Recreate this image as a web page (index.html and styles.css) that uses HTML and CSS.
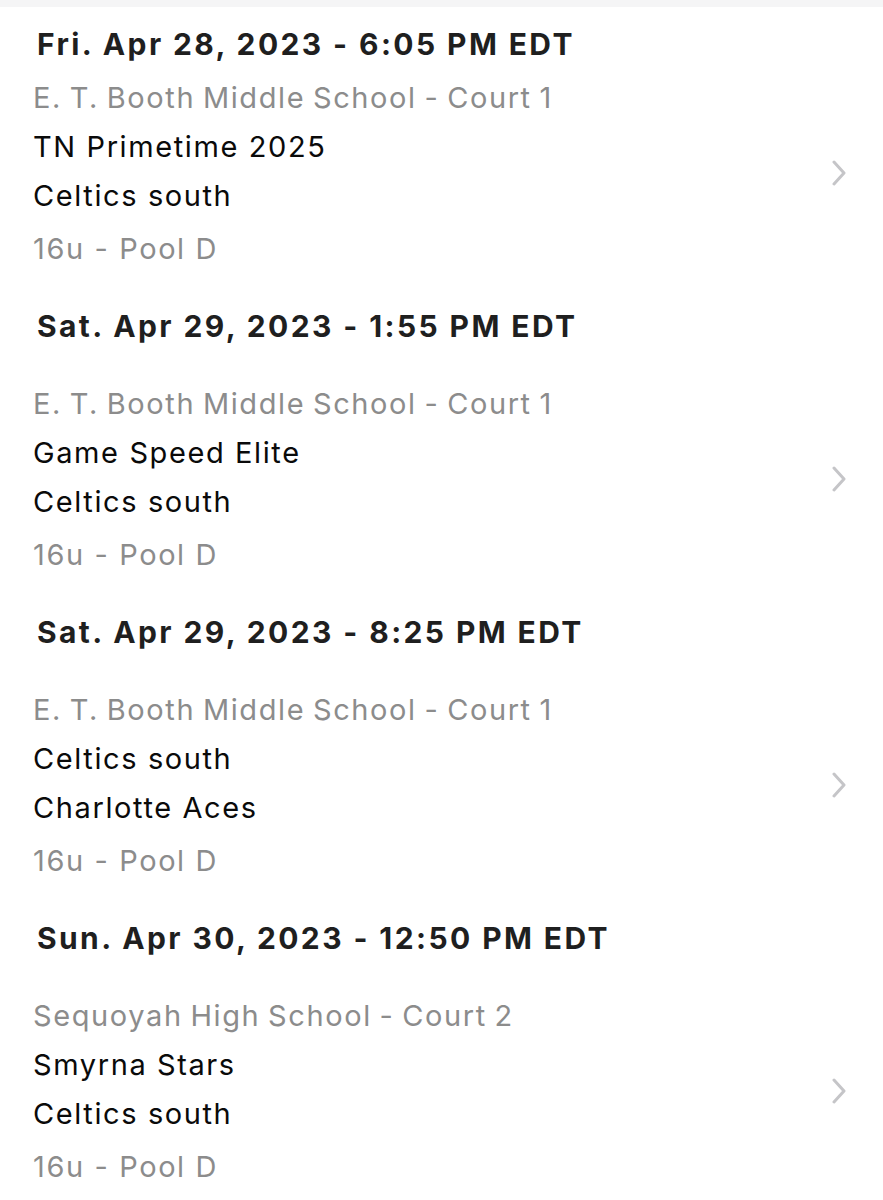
FILE: index.html
```html
<!DOCTYPE html>
<html lang="en">
<head>
<meta charset="utf-8">
<title>Schedule</title>
<link rel="stylesheet" href="styles.css">
</head>
<body>
<div class="topbar"></div>
<ul class="games">
  <li class="game">
    <h2 class="date">Fri. Apr 28, 2023 - 6:05 PM EDT</h2>
    <a class="row" href="#">
      <div class="info">
        <div class="loc">E. T. Booth Middle School - Court 1</div>
        <div class="team">TN Primetime 2025</div>
        <div class="team">Celtics south</div>
        <div class="pool">16u - Pool D</div>
      </div>
      <svg class="chev" width="14" height="26" viewBox="0 0 14 26"><path d="M2 2 L12 13 L2 24" fill="none" stroke="#c5c5c8" stroke-width="3" stroke-linecap="round" stroke-linejoin="round"/></svg>
    </a>
  </li>
  <li class="game">
    <h2 class="date">Sat. Apr 29, 2023 - 1:55 PM EDT</h2>
    <a class="row" href="#">
      <div class="info">
        <div class="loc">E. T. Booth Middle School - Court 1</div>
        <div class="team">Game Speed Elite</div>
        <div class="team">Celtics south</div>
        <div class="pool">16u - Pool D</div>
      </div>
      <svg class="chev" width="14" height="26" viewBox="0 0 14 26"><path d="M2 2 L12 13 L2 24" fill="none" stroke="#c5c5c8" stroke-width="3" stroke-linecap="round" stroke-linejoin="round"/></svg>
    </a>
  </li>
  <li class="game">
    <h2 class="date">Sat. Apr 29, 2023 - 8:25 PM EDT</h2>
    <a class="row" href="#">
      <div class="info">
        <div class="loc">E. T. Booth Middle School - Court 1</div>
        <div class="team">Celtics south</div>
        <div class="team">Charlotte Aces</div>
        <div class="pool">16u - Pool D</div>
      </div>
      <svg class="chev" width="14" height="26" viewBox="0 0 14 26"><path d="M2 2 L12 13 L2 24" fill="none" stroke="#c5c5c8" stroke-width="3" stroke-linecap="round" stroke-linejoin="round"/></svg>
    </a>
  </li>
  <li class="game">
    <h2 class="date">Sun. Apr 30, 2023 - 12:50 PM EDT</h2>
    <a class="row" href="#">
      <div class="info">
        <div class="loc">Sequoyah High School - Court 2</div>
        <div class="team">Smyrna Stars</div>
        <div class="team">Celtics south</div>
        <div class="pool">16u - Pool D</div>
      </div>
      <svg class="chev" width="14" height="26" viewBox="0 0 14 26"><path d="M2 2 L12 13 L2 24" fill="none" stroke="#c5c5c8" stroke-width="3" stroke-linecap="round" stroke-linejoin="round"/></svg>
    </a>
  </li>
</ul>
</body>
</html>
```

FILE: styles.css
```css
html, body {
  margin: 0;
  padding: 0;
  background: #ffffff;
}
body {
  font-family: Inter, "Liberation Sans", Arial, sans-serif;
  color: #111;
  overflow: hidden;
}
.topbar {
  height: 7px;
  background: #f5f5f6;
}
.games {
  list-style: none;
  margin: 0;
  padding: 19px 0 0 0;
}
.game {
  display: flex;
  flex-direction: column;
  gap: 34.5px;
  padding-bottom: 35.5px;
}
.game:first-child {
  gap: 10.5px;
}
.date {
  margin: 0;
  padding-left: 37px;
  font-size: 30px;
  line-height: 36px;
  font-weight: 700;
  letter-spacing: 2.4px;
  color: #1f1f1f;
}
.row {
  display: flex;
  align-items: center;
  justify-content: space-between;
  padding: 0 37px 0 33px;
  text-decoration: none;
  color: inherit;
}
.info {
  display: flex;
  flex-direction: column;
  font-size: 29px;
  line-height: 49px;
  letter-spacing: 1.6px;
}
.loc {
  color: #8c8c8c;
  word-spacing: -2px;
}
.team {
  color: #0a0a0a;
}
.pool {
  color: #8c8c8c;
  margin-top: 4px;
}
.chev {
  display: block;
}
```
